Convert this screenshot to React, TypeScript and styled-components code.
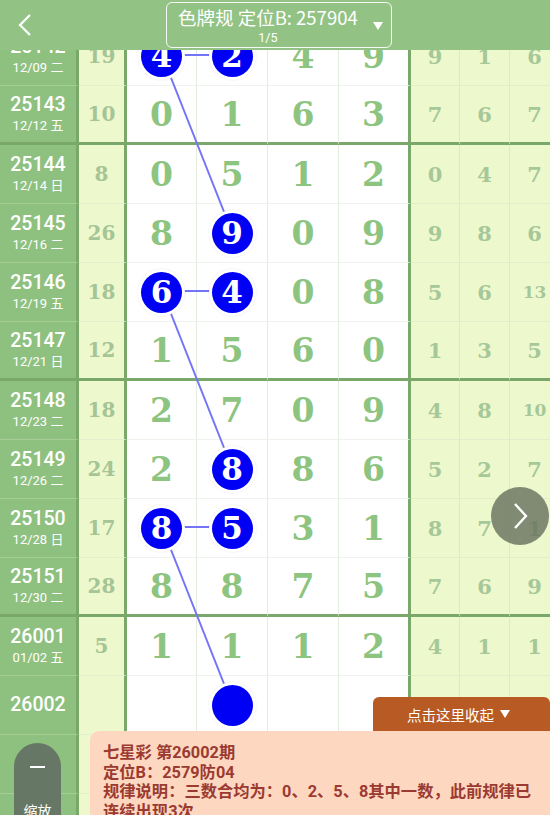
import React from 'react'
import styled, { createGlobalStyle } from 'styled-components'

const GlobalStyle = createGlobalStyle`
    html, body {
        margin: 0;
        padding: 0;
        background: #ffffff;
    }
    body {
        font-family: Roboto, 'Noto Sans CJK SC', sans-serif;
    }
`

type Row = {
    period: string
    date?: string
    count?: number
    main: (number | null)[]
    side: number[]
    balls?: number[]
}

const rows: Row[] = [
    { period: '25142', date: '12/09 二', count: 19, main: [4, 2, 4, 9], side: [9, 1, 6], balls: [0, 1] },
    { period: '25143', date: '12/12 五', count: 10, main: [0, 1, 6, 3], side: [7, 6, 7] },
    { period: '25144', date: '12/14 日', count: 8, main: [0, 5, 1, 2], side: [0, 4, 7] },
    { period: '25145', date: '12/16 二', count: 26, main: [8, 9, 0, 9], side: [9, 8, 6], balls: [1] },
    { period: '25146', date: '12/19 五', count: 18, main: [6, 4, 0, 8], side: [5, 6, 13], balls: [0, 1] },
    { period: '25147', date: '12/21 日', count: 12, main: [1, 5, 6, 0], side: [1, 3, 5] },
    { period: '25148', date: '12/23 二', count: 18, main: [2, 7, 0, 9], side: [4, 8, 10] },
    { period: '25149', date: '12/26 二', count: 24, main: [2, 8, 8, 6], side: [5, 2, 7], balls: [1] },
    { period: '25150', date: '12/28 日', count: 17, main: [8, 5, 3, 1], side: [8, 7, 1], balls: [0, 1] },
    { period: '25151', date: '12/30 二', count: 28, main: [8, 8, 7, 5], side: [7, 6, 9] },
    { period: '26001', date: '01/02 五', count: 5, main: [1, 1, 1, 2], side: [4, 1, 1] },
    { period: '26002', main: [null, null, null, null], side: [], balls: [1] },
    { period: '', main: [null, null, null, null], side: [] },
    { period: '', main: [null, null, null, null], side: [] },
]

// ball links: [row, col] -> [row, col]
const links: [number, number, number, number][] = [
    [0, 0, 0, 1],
    [0, 0, 3, 1],
    [4, 0, 4, 1],
    [4, 0, 7, 1],
    [8, 0, 8, 1],
    [8, 0, 11, 1],
]

const ROW_H = 59
const COLS = [79, 48, 70, 71, 71, 72, 49, 50, 50]
const TABLE_W = COLS.reduce((a, b) => a + b, 0)
const mainCenter = (c: number) => COLS[0] + COLS[1] + COLS.slice(2, 2 + c).reduce((a, b) => a + b, 0) + 35
const rowCenter = (r: number) => r * ROW_H + 28

const THICK = '#79a86a'

const Screen = styled.div`
    width: 550px;
    height: 815px;
    position: relative;
    overflow: hidden;
    display: flex;
    flex-direction: column;
    background: #ffffff;
`

const TopBar = styled.header`
    height: 50px;
    flex: none;
    background: #93c384;
    display: flex;
    align-items: center;
    position: relative;
    z-index: 5;
`

const BackButton = styled.button`
    width: 50px;
    height: 50px;
    border: none;
    background: none;
    padding: 0 0 0 17px;
    display: flex;
    align-items: center;
    cursor: pointer;
`

const TitleBox = styled.div`
    margin-left: 116px;
    width: 226px;
    height: 46px;
    box-sizing: border-box;
    border: 1.5px solid rgba(255, 255, 255, 0.9);
    border-radius: 6px;
    display: flex;
    align-items: center;
    padding: 0 8px 0 11px;
    color: #ffffff;
`

const TitleText = styled.div`
    display: flex;
    flex-direction: column;
    align-items: center;
    margin-top: 1px;
    strong {
        font-family: 'Noto Sans CJK SC', Roboto, sans-serif;
        font-weight: 400;
        font-size: 18.5px;
        line-height: 20px;
        white-space: nowrap;
    }
    span {
        font-size: 12.5px;
        line-height: 14px;
        margin-top: 4px;
    }
`

const Caret = styled.span`
    margin-left: 15px;
    margin-top: 2px;
    width: 0;
    height: 0;
    border-left: 5px solid transparent;
    border-right: 5px solid transparent;
    border-top: 8px solid #ffffff;
`

const Board = styled.div`
    flex: 1;
    overflow: hidden;
    position: relative;
`

const Table = styled.div`
    width: ${TABLE_W}px;
    margin-top: -23px;
    position: relative;
`

const TableRow = styled.div`
    display: grid;
    grid-template-columns: ${COLS.map(c => `${c}px`).join(' ')};
    height: ${ROW_H}px;
`

const Cell = styled.div<{ $end: boolean; $line: string; $bg: string; $right?: string }>`
    box-sizing: border-box;
    height: ${ROW_H}px;
    background: ${p => p.$bg};
    border-bottom: ${p => (p.$end ? `3px solid ${THICK}` : `1px solid ${p.$line}`)};
    border-right: ${p => p.$right ?? 'none'};
    display: flex;
    flex-direction: column;
    align-items: center;
    justify-content: center;
`

const Period = styled.div`
    color: #ffffff;
    font-size: 19.5px;
    line-height: 22px;
    font-weight: 500;
`

const DateText = styled.div`
    color: #ffffff;
    font-family: Roboto, 'Noto Sans CJK SC', sans-serif;
    font-size: 13px;
    line-height: 16px;
    margin-top: 2px;
`

const Digit = styled.span<{ $size: number; $color: string }>`
    font-family: 'DejaVu Serif', 'Liberation Serif', serif;
    font-weight: 700;
    font-size: ${p => p.$size}px;
    color: ${p => p.$color};
    line-height: 1;
`

const Ball = styled.div`
    position: relative;
    z-index: 2;
    width: 41px;
    height: 41px;
    border-radius: 50%;
    background: #0000f5;
    box-shadow: 0 0 0 3px #ffffff, 0 0 2px 3px rgba(0, 0, 0, 0.1);
    display: flex;
    align-items: center;
    justify-content: center;
    color: #ffffff;
    font-family: 'DejaVu Serif', 'Liberation Serif', serif;
    font-weight: 700;
    font-size: 31px;
    line-height: 1;
`

const LinkLayer = styled.svg`
    position: absolute;
    top: 0;
    left: 0;
    z-index: 1;
    pointer-events: none;
`

const NextButton = styled.button`
    position: absolute;
    left: 491px;
    top: 487px;
    width: 58px;
    height: 58px;
    border-radius: 50%;
    border: none;
    background: rgba(105, 115, 95, 0.82);
    display: flex;
    align-items: center;
    justify-content: center;
    z-index: 6;
    padding: 0;
`

const ZoomButton = styled.button`
    position: absolute;
    left: 14px;
    top: 743px;
    width: 47px;
    height: 110px;
    border: none;
    border-radius: 24px;
    background: #667865;
    color: #ffffff;
    display: flex;
    flex-direction: column;
    align-items: center;
    padding: 23px 0 0;
    z-index: 6;
    font-family: 'Noto Sans CJK SC', sans-serif;
    font-size: 14px;
    i {
        display: block;
        width: 15px;
        height: 2px;
        background: #ffffff;
    }
    span {
        margin-top: 32px;
    }
`

const InfoPanel = styled.section`
    position: absolute;
    left: 90px;
    right: 0;
    top: 731px;
    height: 140px;
    background: #fdd7c0;
    border-top-left-radius: 9px;
    box-sizing: border-box;
    padding: 12px 12px 0 13px;
    z-index: 6;
    color: #9b3a31;
    font-family: Roboto, 'Noto Sans CJK SC', sans-serif;
    font-weight: 700;
    font-size: 16.3px;
    line-height: 19.5px;
    p {
        margin: 0;
    }
`

const CollapseTab = styled.button`
    position: absolute;
    right: 0;
    top: -34px;
    width: 177px;
    height: 34px;
    border: none;
    border-radius: 6px 6px 0 0;
    background: #b75a24;
    color: #ffffff;
    font-family: 'Noto Sans CJK SC', sans-serif;
    font-size: 14.5px;
    display: flex;
    align-items: center;
    justify-content: center;
    gap: 6px;
    padding: 0 6px 0 0;
    i {
        width: 0;
        height: 0;
        border-left: 5px solid transparent;
        border-right: 5px solid transparent;
        border-top: 8px solid #ffffff;
    }
`

const sideSize = (n: number) => (n >= 10 ? 17 : 21)

const BoardRow: React.FC<{ row: Row; index: number }> = ({ row, index }) => {
    const end = index % 4 === 1
    const vThick = `3px solid ${THICK}`
    return (
        <TableRow>
            <Cell $end={end} $line="#a4ce96" $bg="#8ec17f" $right={vThick}>
                {row.period && <Period>{row.period}</Period>}
                {row.date && <DateText>{row.date}</DateText>}
            </Cell>
            <Cell $end={end} $line="#e4efcb" $bg="#eef8cd" $right={vThick}>
                {row.count !== undefined && <Digit $size={20} $color="#a5c596">{row.count}</Digit>}
            </Cell>
            {row.main.map((n, c) => (
                <Cell
                    key={c}
                    $end={end}
                    $line="#eef3ec"
                    $bg="#ffffff"
                    $right={c === 3 ? vThick : '1px solid #e2ede0'}
                >
                    {row.balls?.includes(c)
                        ? <Ball>{n}</Ball>
                        : n !== null && <Digit $size={33} $color="#8dc47f">{n}</Digit>}
                </Cell>
            ))}
            {[0, 1, 2].map(c => (
                <Cell key={`s${c}`} $end={end} $line="#e2eecb" $bg="#eef8cd" $right="1px solid #dbeac7">
                    {row.side[c] !== undefined && (
                        <Digit $size={sideSize(row.side[c])} $color="#a6c899">{row.side[c]}</Digit>
                    )}
                </Cell>
            ))}
        </TableRow>
    )
}

const App: React.FC = () => {
    return (
        <>
            <GlobalStyle />
            <Screen>
                <TopBar>
                    <BackButton type="button" aria-label="返回">
                        <svg width="16" height="24" viewBox="0 0 16 24">
                            <path d="M13 2 L3 12 L13 22" fill="none" stroke="#ffffff" strokeWidth="2.2" />
                        </svg>
                    </BackButton>
                    <TitleBox>
                        <TitleText>
                            <strong>色牌规 定位B: 257904</strong>
                            <span>1/5</span>
                        </TitleText>
                        <Caret />
                    </TitleBox>
                </TopBar>
                <Board>
                    <Table>
                        {rows.map((row, i) => <BoardRow key={i} row={row} index={i} />)}
                        <LinkLayer width={TABLE_W} height={rows.length * ROW_H}>
                            {links.map(([r1, c1, r2, c2], i) => (
                                <line
                                    key={i}
                                    x1={mainCenter(c1)}
                                    y1={rowCenter(r1)}
                                    x2={mainCenter(c2)}
                                    y2={rowCenter(r2)}
                                    stroke="#7474f6"
                                    strokeWidth="2"
                                />
                            ))}
                        </LinkLayer>
                    </Table>
                </Board>
                <NextButton type="button" aria-label="下一页">
                    <svg width="20" height="30" viewBox="0 0 20 30">
                        <path d="M5 3 L16 15 L5 27" fill="none" stroke="#ffffff" strokeWidth="2.4" />
                    </svg>
                </NextButton>
                <ZoomButton type="button">
                    <i />
                    <span>缩放</span>
                </ZoomButton>
                <InfoPanel>
                    <CollapseTab type="button">
                        点击这里收起 <i />
                    </CollapseTab>
                    <p>七星彩 第26002期</p>
                    <p>定位B：2579防04</p>
                    <p>规律说明：三数合均为：0、2、5、8其中一数，此前规律已连续出现3次</p>
                </InfoPanel>
            </Screen>
        </>
    )
}

export default App
